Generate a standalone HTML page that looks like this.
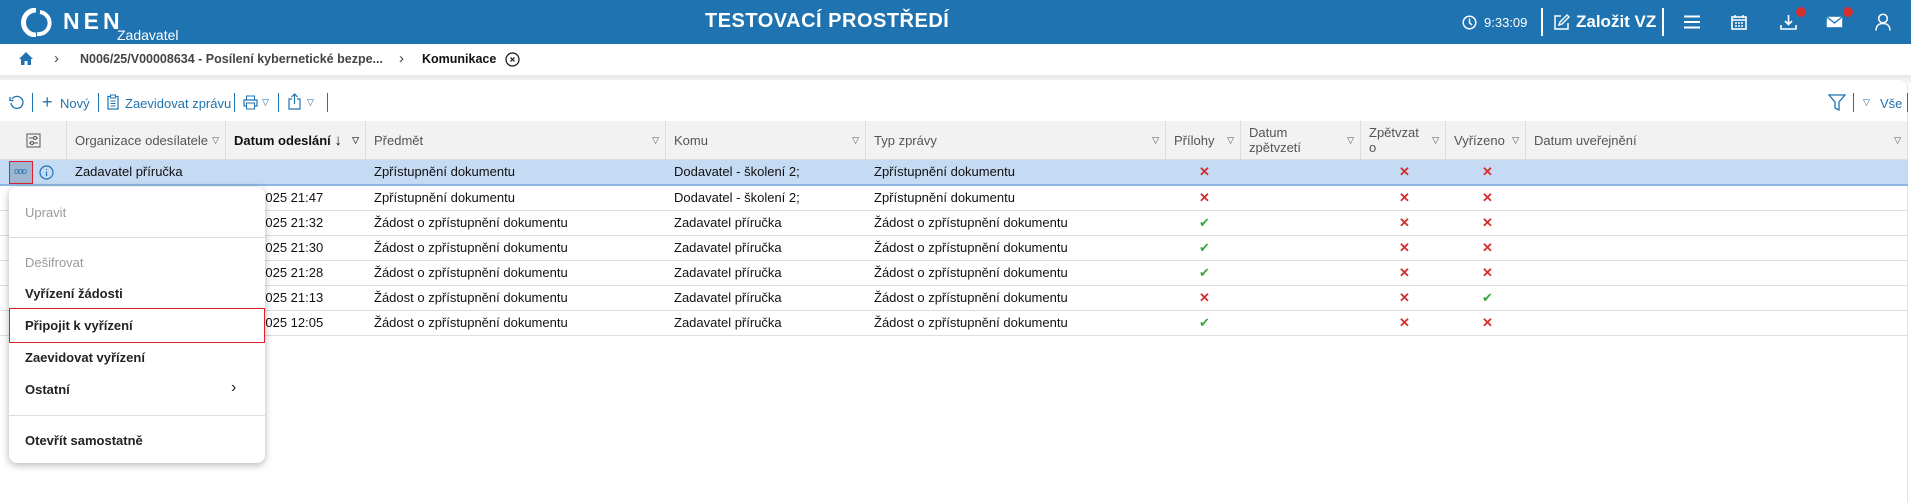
<!DOCTYPE html>
<html><head><meta charset="utf-8"><style>
*{margin:0;padding:0;box-sizing:border-box}
body{width:1911px;height:502px;overflow:hidden;background:#fff;font-family:"Liberation Sans",sans-serif;font-size:13px;color:#111;position:relative}
.a{position:absolute;white-space:nowrap}
#hdr{position:absolute;left:0;top:0;width:1911px;height:44px;background:#1f73b1;color:#fff}
.sep{position:absolute;width:1px;background:#1f73b1}
.hsep{position:absolute;width:2px;height:28px;top:8px;background:#fff}
.th{position:absolute;top:121px;height:39px;background:#f2f2f2;border-right:1px solid #ddd;border-bottom:1px solid #ddd;color:#555;padding:0 8px;line-height:39px;font-size:13px}
.tri{position:absolute;right:6px;top:0;font-size:9px;color:#555}
.row{position:absolute;left:0;width:1908px;height:25px;border-bottom:1px solid #ddd}
.c{position:absolute;line-height:24px;white-space:nowrap}
.x{color:#d32f2f;font-weight:bold;font-size:13px}
.ok{color:#3aa63a;font-size:13px}
#menu{position:absolute;left:9px;top:187px;width:256px;height:276px;background:#fff;border-radius:8px;box-shadow:0 2px 8px rgba(0,0,0,.3)}
#menu .i{position:absolute;left:16px;font-size:13px;color:#222;font-weight:bold}
#menu .d{color:#999;font-weight:normal}
#menu .hr{position:absolute;left:0;width:256px;height:1px;background:#ddd}
</style></head><body>
<div id="hdr">
 <svg class="a" style="left:20px;top:8px" width="33" height="29" viewBox="0 0 33 29"><path d="M16 2 A12.5 12.5 0 1 0 16 27" fill="none" stroke="#fff" stroke-width="5"/><path d="M20 4 A11 11 0 0 1 17 26" fill="none" stroke="#fff" stroke-width="4"/></svg>
 <div class="a" style="left:63px;top:8px;font-size:23px;font-weight:bold;letter-spacing:4px">NEN</div>
 <div class="a" style="left:117px;top:27px;font-size:14px">Zadavatel</div>
 <div class="a" style="left:705px;top:10px;font-size:20px;font-weight:bold;letter-spacing:.5px">TESTOVACÍ PROSTŘEDÍ</div>
 <svg class="a" style="left:1462px;top:15px" width="15" height="15" viewBox="0 0 15 15"><circle cx="7.5" cy="7.5" r="6.3" fill="none" stroke="#fff" stroke-width="1.5"/><path d="M7.5 3.5V7.8L10 10" fill="none" stroke="#fff" stroke-width="1.5"/></svg>
 <div class="a" style="left:1484px;top:15px;font-size:13px">9:33:09</div>
 <div class="hsep" style="left:1541px"></div>
 <svg class="a" style="left:1553px;top:14px" width="17" height="17" viewBox="0 0 17 17"><path d="M8 2H2V15H15V9" fill="none" stroke="#fff" stroke-width="1.5"/><path d="M6 11L7 8L14 1L16 3L9 10Z" fill="none" stroke="#fff" stroke-width="1.4"/></svg>
 <div class="a" style="left:1576px;top:12px;font-size:17px;font-weight:bold">Založit VZ</div>
 <div class="hsep" style="left:1662px"></div>
 <svg class="a" style="left:1684px;top:15px" width="16" height="14"><path d="M0 1.5H16M0 7H16M0 12.5H16" stroke="#fff" stroke-width="2"/></svg>
 <svg class="a" style="left:1731px;top:14px" width="16" height="16" viewBox="0 0 16 16"><rect x="1" y="3" width="14" height="12" fill="none" stroke="#fff" stroke-width="1.6"/><path d="M1 6H15M4 1V4M12 1V4M4 9h2M7 9h2M10 9h2M4 12h2M7 12h2M10 12h2" stroke="#fff" stroke-width="1.4"/></svg>
 <svg class="a" style="left:1780px;top:14px" width="17" height="17" viewBox="0 0 17 17"><path d="M8.5 1V10M5 7L8.5 10.5L12 7M1 11V15H16V11" fill="none" stroke="#fff" stroke-width="1.6"/></svg>
 <div class="a" style="left:1796px;top:7px;width:10px;height:10px;border-radius:5px;background:#d32f2f"></div>
 <svg class="a" style="left:1826px;top:16px" width="17" height="12" viewBox="0 0 17 12"><rect x="0.8" y="0.8" width="15.4" height="10.4" fill="#fff"/><path d="M1 1L8.5 7L16 1" fill="none" stroke="#1f73b1" stroke-width="1.3"/></svg>
 <div class="a" style="left:1843px;top:7px;width:10px;height:10px;border-radius:5px;background:#d32f2f"></div>
 <svg class="a" style="left:1875px;top:13px" width="16" height="18" viewBox="0 0 16 18"><circle cx="8" cy="5.5" r="4.3" fill="none" stroke="#fff" stroke-width="1.5"/><path d="M1 17.5C1 12.5 4 10.5 8 10.5S15 12.5 15 17.5" fill="none" stroke="#fff" stroke-width="1.5"/></svg>
</div>
<!-- breadcrumb -->
<svg class="a" style="left:18px;top:51px" width="16" height="15" viewBox="0 0 16 15"><path d="M8 1L1 8H3V14H6.5V10H9.5V14H13V8H15Z" fill="#1f73b1"/></svg>
<div class="a" style="left:54px;top:50px;font-size:15px;color:#444">›</div>
<div class="a" style="left:80px;top:52px;font-size:12.5px;font-weight:bold;color:#444">N006/25/V00008634 - Posílení kybernetické bezpe...</div>
<div class="a" style="left:399px;top:50px;font-size:15px;color:#444">›</div>
<div class="a" style="left:422px;top:52px;font-size:12.5px;font-weight:bold;color:#111">Komunikace</div>
<svg class="a" style="left:505px;top:52px" width="15" height="15" viewBox="0 0 15 15"><circle cx="7.5" cy="7.5" r="6.5" fill="none" stroke="#111" stroke-width="1.2"/><path d="M5.5 5.5L9.5 9.5M9.5 5.5L5.5 9.5" stroke="#111" stroke-width="1.2"/></svg>
<div class="a" style="left:0;top:75px;width:1911px;height:8px;background:linear-gradient(#e6e6e6,#f7f7f7)"></div>
<div class="a" style="left:0;top:80px;width:1908px;height:422px;background:#fff;border-radius:0 8px 0 0;border-right:1px solid #e4e4e4"></div>
<!-- toolbar -->
<svg class="a" style="left:9px;top:95px" width="15" height="15" viewBox="0 0 15 15"><path d="M3 4A6 6 0 1 1 2 8" fill="none" stroke="#1f73b1" stroke-width="1.3"/><path d="M1 2V5.5H4.5" fill="none" stroke="#1f73b1" stroke-width="1.3"/></svg>
<div class="sep" style="left:32px;top:93px;height:19px"></div>
<div class="a" style="left:42px;top:94px;font-size:18px;color:#1f73b1;line-height:16px">+</div>
<div class="a" style="left:60px;top:96px;color:#1f73b1">Nový</div>
<div class="sep" style="left:98px;top:93px;height:19px"></div>
<svg class="a" style="left:107px;top:94px" width="12" height="16" viewBox="0 0 12 16"><rect x="1" y="2.5" width="10" height="12.5" fill="none" stroke="#1f73b1" stroke-width="1.2"/><rect x="3.5" y="1" width="5" height="3" fill="#fff" stroke="#1f73b1"/><path d="M3.5 7H8.5M3.5 9.5H8.5M3.5 12H8.5" stroke="#1f73b1"/></svg>
<div class="a" style="left:125px;top:96px;color:#1f73b1">Zaevidovat zprávu</div>
<div class="sep" style="left:234px;top:93px;height:19px"></div>
<svg class="a" style="left:243px;top:95px" width="15" height="15" viewBox="0 0 15 15"><rect x="1" y="5" width="13" height="6" fill="none" stroke="#1f73b1" stroke-width="1.2"/><rect x="3.5" y="1" width="8" height="4" fill="none" stroke="#1f73b1"/><rect x="3.5" y="8" width="8" height="6" fill="#fff" stroke="#1f73b1"/></svg>
<div class="a" style="left:262px;top:97px;font-size:9px;color:#1f73b1">▽</div>
<div class="sep" style="left:278px;top:93px;height:19px"></div>
<svg class="a" style="left:288px;top:93px" width="13" height="17" viewBox="0 0 13 17"><path d="M4 6H1V16H12V6H9M6.5 11V1M3.5 4L6.5 1L9.5 4" fill="none" stroke="#1f73b1" stroke-width="1.2"/></svg>
<div class="a" style="left:307px;top:97px;font-size:9px;color:#1f73b1">▽</div>
<div class="sep" style="left:327px;top:93px;height:19px"></div>
<svg class="a" style="left:1828px;top:94px" width="18" height="17" viewBox="0 0 18 17"><path d="M1 1H17L11 8V16L7 14V8Z" fill="none" stroke="#1f73b1" stroke-width="1.3"/></svg>
<div class="sep" style="left:1853px;top:93px;height:19px"></div>
<div class="a" style="left:1863px;top:97px;font-size:9px;color:#1f73b1">▽</div>
<div class="a" style="left:1880px;top:96px;color:#1f73b1">Vše</div>
<div class="sep" style="left:1907px;top:93px;height:19px"></div>
<!-- table header -->
<div class="th" style="left:0;width:67px"><svg style="position:absolute;left:26px;top:12px" width="15" height="15" viewBox="0 0 15 15"><rect x="1" y="1" width="13" height="13" fill="none" stroke="#555"/><path d="M3 5H12M3 10H12" stroke="#555"/><circle cx="9" cy="5" r="1.5" fill="#fff" stroke="#555"/><circle cx="6" cy="10" r="1.5" fill="#fff" stroke="#555"/></svg></div>
<div class="th" style="left:67px;width:159px">Organizace odesílatele<span class="tri">▽</span></div>
<div class="th" style="left:226px;width:140px;color:#111;font-weight:bold">Datum odeslání <span style="font-weight:normal;font-size:15px">↓</span><span class="tri">▽</span></div>
<div class="th" style="left:366px;width:300px">Předmět<span class="tri">▽</span></div>
<div class="th" style="left:666px;width:200px">Komu<span class="tri">▽</span></div>
<div class="th" style="left:866px;width:300px">Typ zprávy<span class="tri">▽</span></div>
<div class="th" style="left:1166px;width:75px">Přílohy<span class="tri">▽</span></div>
<div class="th" style="left:1241px;width:120px;line-height:15px;padding-top:4px">Datum<br>zpětvzetí<span class="tri" style="top:12px">▽</span></div>
<div class="th" style="left:1361px;width:85px;line-height:15px;padding-top:4px">Zpětvzat<br>o<span class="tri" style="top:12px">▽</span></div>
<div class="th" style="left:1446px;width:80px">Vyřízeno<span class="tri">▽</span></div>
<div class="th" style="left:1526px;width:382px">Datum uveřejnění<span class="tri">▽</span></div>
<!-- rows -->
<div class="row" style="top:160px;background:#c5daf3;border-bottom:2px solid #8fb6e3;height:26px">
 <div class="a" style="left:9px;top:1px;width:24px;height:23px;background:#9fb6d0;border:1.5px solid #e0202a"></div>
 <div class="a" style="left:14px;top:6px;font-size:9px;color:#1f73b1;letter-spacing:-1px">ooo</div>
 <svg class="a" style="left:39px;top:5px" width="15" height="15" viewBox="0 0 15 15"><circle cx="7.5" cy="7.5" r="6.5" fill="none" stroke="#1f73b1" stroke-width="1.2"/><path d="M7.5 6.5V11M7.5 4V5" stroke="#1f73b1" stroke-width="1.2"/></svg>
 <div class="c" style="left:75px">Zadavatel příručka</div>
 <div class="c" style="left:374px">Zpřístupnění dokumentu</div>
 <div class="c" style="left:674px">Dodavatel - školení 2;</div>
 <div class="c" style="left:874px">Zpřístupnění dokumentu</div>
 <div class="c x" style="left:1199px">✕</div><div class="c x" style="left:1399px">✕</div><div class="c x" style="left:1482px">✕</div>
</div>
<div class="row" style="top:186px"><div class="c" style="left:222px">01.10.2025 21:47</div><div class="c" style="left:374px">Zpřístupnění dokumentu</div><div class="c" style="left:674px">Dodavatel - školení 2;</div><div class="c" style="left:874px">Zpřístupnění dokumentu</div><div class="c x" style="left:1199px">✕</div><div class="c x" style="left:1399px">✕</div><div class="c x" style="left:1482px">✕</div></div>
<div class="row" style="top:211px"><div class="c" style="left:222px">01.10.2025 21:32</div><div class="c" style="left:374px">Žádost o zpřístupnění dokumentu</div><div class="c" style="left:674px">Zadavatel příručka</div><div class="c" style="left:874px">Žádost o zpřístupnění dokumentu</div><div class="c ok" style="left:1199px">✔</div><div class="c x" style="left:1399px">✕</div><div class="c x" style="left:1482px">✕</div></div>
<div class="row" style="top:236px"><div class="c" style="left:222px">01.10.2025 21:30</div><div class="c" style="left:374px">Žádost o zpřístupnění dokumentu</div><div class="c" style="left:674px">Zadavatel příručka</div><div class="c" style="left:874px">Žádost o zpřístupnění dokumentu</div><div class="c ok" style="left:1199px">✔</div><div class="c x" style="left:1399px">✕</div><div class="c x" style="left:1482px">✕</div></div>
<div class="row" style="top:261px"><div class="c" style="left:222px">01.10.2025 21:28</div><div class="c" style="left:374px">Žádost o zpřístupnění dokumentu</div><div class="c" style="left:674px">Zadavatel příručka</div><div class="c" style="left:874px">Žádost o zpřístupnění dokumentu</div><div class="c ok" style="left:1199px">✔</div><div class="c x" style="left:1399px">✕</div><div class="c x" style="left:1482px">✕</div></div>
<div class="row" style="top:286px"><div class="c" style="left:222px">01.10.2025 21:13</div><div class="c" style="left:374px">Žádost o zpřístupnění dokumentu</div><div class="c" style="left:674px">Zadavatel příručka</div><div class="c" style="left:874px">Žádost o zpřístupnění dokumentu</div><div class="c x" style="left:1199px">✕</div><div class="c x" style="left:1399px">✕</div><div class="c ok" style="left:1482px">✔</div></div>
<div class="row" style="top:311px"><div class="c" style="left:222px">01.10.2025 12:05</div><div class="c" style="left:374px">Žádost o zpřístupnění dokumentu</div><div class="c" style="left:674px">Zadavatel příručka</div><div class="c" style="left:874px">Žádost o zpřístupnění dokumentu</div><div class="c ok" style="left:1199px">✔</div><div class="c x" style="left:1399px">✕</div><div class="c x" style="left:1482px">✕</div></div>
<!-- menu -->
<div id="menu">
 <div class="i d" style="top:18px">Upravit</div>
 <div class="hr" style="top:50px"></div>
 <div class="i d" style="top:68px">Dešifrovat</div>
 <div class="i" style="top:99px">Vyřízení žádosti</div>
 <div class="a" style="left:0;top:121px;width:256px;height:35px;border:1.5px solid #e0202a"></div>
 <div class="i" style="top:131px">Připojit k vyřízení</div>
 <div class="i" style="top:163px">Zaevidovat vyřízení</div>
 <div class="i" style="top:195px">Ostatní</div>
 <div class="a" style="left:222px;top:192px;font-size:16px;color:#222">›</div>
 <div class="hr" style="top:228px"></div>
 <div class="i" style="top:246px">Otevřít samostatně</div>
</div>
</body></html>
